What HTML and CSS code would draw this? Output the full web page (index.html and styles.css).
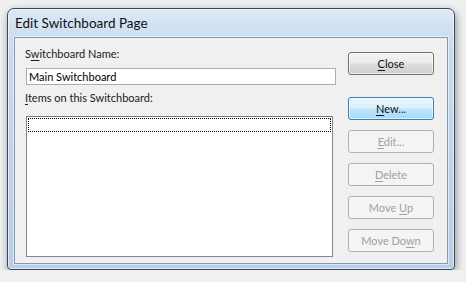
FILE: index.html
```html
<!DOCTYPE html>
<html lang="en">
<head>
    <meta charset="UTF-8">
    <title>Edit Switchboard Page</title>
    <link rel="stylesheet" href="styles.css">
</head>
<body>
    <div class="window">
        <div class="title-bar">Edit Switchboard Page</div>
        <div class="client">
            <div class="left-col">
                <label class="field-label" for="sbName">S<u>w</u>itchboard Name:</label>
                <input type="text" id="sbName" class="text-box" value="Main Switchboard">
                <div class="field-label"><u>I</u>tems on this Switchboard:</div>
                <div class="list-box">
                    <div class="list-row"></div>
                </div>
            </div>
            <div class="right-col">
                <button class="btn btn-close"><u>C</u>lose</button>
                <button class="btn btn-default"><u>N</u>ew...</button>
                <button class="btn" disabled><u>E</u>dit...</button>
                <button class="btn" disabled><u>D</u>elete</button>
                <button class="btn" disabled>Move <u>U</u>p</button>
                <button class="btn" disabled>Move Do<u>w</u>n</button>
            </div>
        </div>
    </div>
</body>
</html>
```

FILE: styles.css
```css
body {
    margin: 0;
    padding: 0;
    background: #eef0f2;
    font-family: Lato, "Noto Sans", sans-serif;
    font-size: 11px;
    color: #1a1a1a;
}
u {
    text-decoration: underline;
    text-underline-offset: 2px;
}
.window {
    box-sizing: border-box;
    margin: 8px 0 0 7px;
    width: 448px;
    height: 262px;
    border: 1px solid #3a4654;
    border-radius: 7px 7px 4px 4px;
    background: linear-gradient(to bottom, #dce8f5 0%, #c8dbef 14%, #bed4ec 60%, #b6cde8 100%);
    box-shadow: 1px 3px 8px rgba(0,0,0,0.4), inset 0 0 0 1px rgba(255,255,255,0.6);
    padding: 0 6px 5px 6px;
    display: flex;
    flex-direction: column;
}
.title-bar {
    height: 28px;
    line-height: 28px;
    padding-left: 1px;
    font-size: 13.5px;
    color: #111;
}
.client {
    flex: 1;
    display: flex;
    background: #f0f0f0;
    border: 1px solid #8799ad;
    box-shadow: 0 0 0 1px rgba(255,255,255,0.5);
    padding: 8px 12px 0 10px;
}
.left-col {
    width: 308px;
    display: flex;
    flex-direction: column;
}
.field-label {
    display: block;
    height: 15px;
    line-height: 15px;
}
.text-box {
    margin: 7px 0 5px 1px;
    width: 310px;
    height: 17px;
    box-sizing: border-box;
    border: 1px solid #abadb3;
    background: #fff;
    padding: 0 2px;
    font-family: inherit;
    font-size: 11px;
    color: #000;
    outline: none;
}
.list-box {
    margin: 11px 0 0 1px;
    width: 307px;
    height: 141px;
    box-sizing: border-box;
    border: 1px solid #828790;
    border-top-color: #7a7a7a;
    background: #fff;
    padding: 1px;
}
.list-row {
    height: 14px;
    box-sizing: border-box;
    border: 1px dotted #000;
}
.right-col {
    margin-left: 15px;
    padding-top: 6px;
    display: flex;
    flex-direction: column;
    gap: 10px;
}
.btn {
    width: 86px;
    height: 23px;
    padding: 0;
    border: 1px solid #707070;
    border-radius: 3px;
    background: linear-gradient(to bottom, #f3f3f3 0%, #ebebeb 48%, #dddddd 52%, #cfcfcf 100%);
    box-shadow: inset 0 0 0 1px rgba(255,255,255,0.7);
    font-family: inherit;
    font-size: 11px;
    color: #111;
}
.btn-close {
    margin-bottom: 12px;
}
.btn-default {
    border-color: #3c7fb1;
    background: linear-gradient(to bottom, #eaf6fd 0%, #d9f0fc 48%, #bee6fd 52%, #a7d9f5 100%);
    box-shadow: inset 0 0 0 1px rgba(255,255,255,0.6);
}
.btn:disabled {
    border-color: #adb2b5;
    background: #f4f4f4;
    box-shadow: none;
    color: #a0a0a0;
}
```
